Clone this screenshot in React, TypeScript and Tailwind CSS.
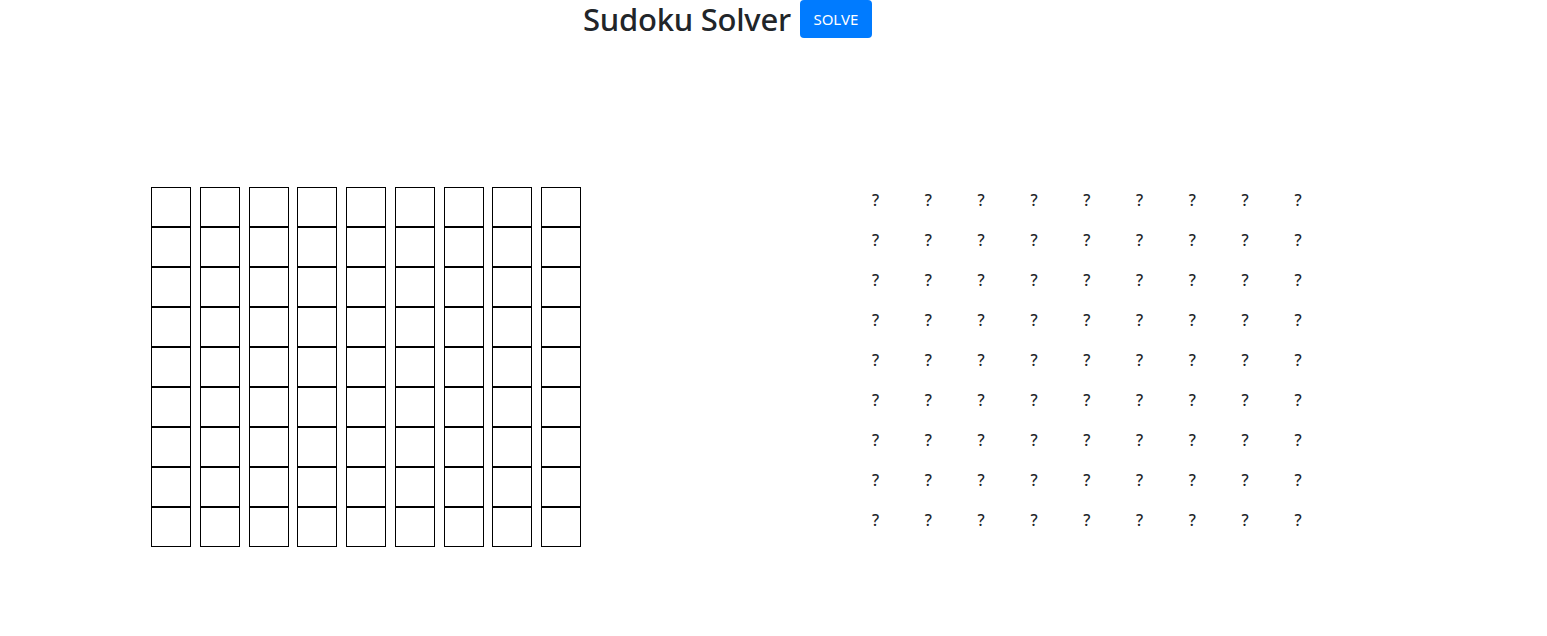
import React from "react";

const rows = Array.from({ length: 9 }, (_, i) => i);

export default function App() {
  return (
    <div
      className="min-h-[636px] bg-white text-[#212529]"
      style={{ fontFamily: '"Noto Sans", "Open Sans", "Liberation Sans", sans-serif' }}
    >
      <div className="flex items-center pl-[583px]">
        <h2 className="m-0 text-[31px] font-medium leading-[38px] tracking-[-0.25px]">Sudoku Solver</h2>
        <button className="ml-[9px] h-[38px] w-[72px] rounded-[4px] bg-[#007bff] text-[15px] text-white">
          SOLVE
        </button>
      </div>
      <div className="mt-[149px] flex">
        <div className="ml-[151px] flex gap-[8.75px]">
          {rows.map((c) => (
            <div key={c} className="flex flex-col">
              {rows.map((r) => (
                <input
                  key={r}
                  type="text"
                  className="box-border h-[40px] w-[40px] border border-black bg-white p-0 outline-none"
                />
              ))}
            </div>
          ))}
        </div>
        <div className="ml-[291px] mt-[1px] grid grid-cols-[repeat(9,52.8px)]">
          {rows.map((r) =>
            rows.map((c) => (
              <div key={`${r}-${c}`} className="h-[40px] text-[16px] font-medium leading-[24px]">
                ?
              </div>
            ))
          )}
        </div>
      </div>
    </div>
  );
}
